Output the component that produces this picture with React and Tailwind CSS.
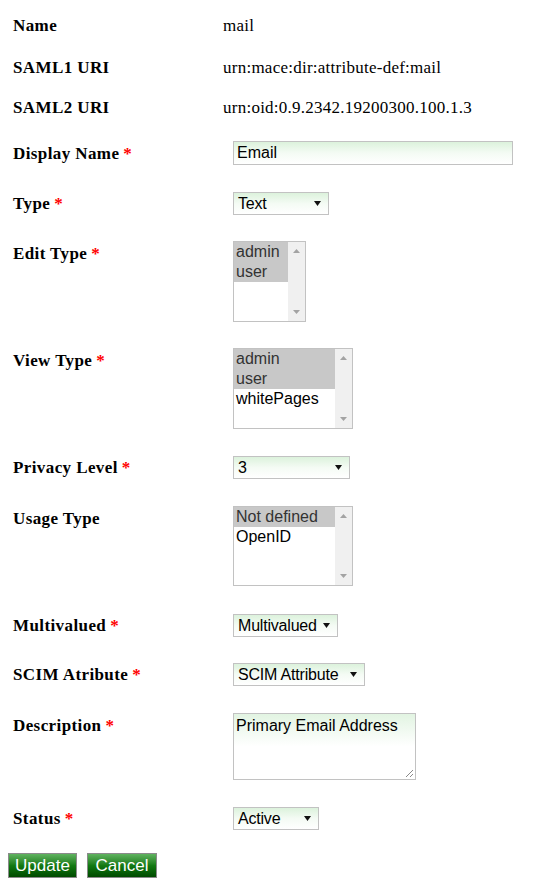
import React from 'react';

const serif = "font-['Liberation_Serif','Times_New_Roman',serif]";
const sans = "font-['Liberation_Sans',Arial,sans-serif]";

const Req = () => <span className="text-[#ff0000] ml-[4px]">*</span>;

const Label = ({ children, req, pt = 'pt-[3px]' }) => (
  <div className={`w-[220px] shrink-0 ${pt} text-[17px] leading-[18px] font-bold tracking-[0.4px] text-black ${serif}`}>
    {children}
    {req && <Req />}
  </div>
);

const Arrow = () => (
  <svg width="7" height="5" viewBox="0 0 7 5" className="shrink-0">
    <path d="M0 0 L7 0 L3.5 5 Z" fill="#111" />
  </svg>
);

const Select = ({ value, width }) => (
  <div
    className={`h-[23px] border border-[#c2c2c2] bg-gradient-to-b from-[#dcf2dc] via-[#f4fbf4] to-white flex items-center justify-between pl-[4px] pr-[7px] text-[16px] tracking-[-0.2px] text-black ${sans}`}
    style={{ width }}
  >
    <span className="leading-none">{value}</span>
    <Arrow />
  </div>
);

const ListBox = ({ items, selected, width, height = 81 }) => (
  <div className={`flex border border-[#c2c2c2] bg-white ${sans}`} style={{ width, height }}>
    <div className="flex-1 min-w-0">
      {items.map(it => (
        <div
          key={it}
          className={`h-[20px] leading-[20px] pl-[2px] text-[16px] ${selected.includes(it) ? 'bg-[#c8c8c8] text-[#333]' : 'text-black'}`}
        >
          {it}
        </div>
      ))}
    </div>
    <div className="w-[17px] bg-[#f0f0f0] flex flex-col items-center justify-between py-[7px]">
      <svg width="7" height="4" viewBox="0 0 7 4"><path d="M0 4 L7 4 L3.5 0 Z" fill="#a3a3a3" /></svg>
      <svg width="7" height="4" viewBox="0 0 7 4"><path d="M0 0 L7 0 L3.5 4 Z" fill="#a3a3a3" /></svg>
    </div>
  </div>
);

const TextRow = ({ label, value, h }) => (
  <div className="flex items-start pl-[13px]" style={{ height: h }}>
    <div className={`w-[210px] shrink-0 text-[17px] leading-[18px] font-bold tracking-[0.4px] ${serif}`}>{label}</div>
    <div className={`text-[17px] leading-[18px] tracking-[0.25px] text-black ${serif}`}>{value}</div>
  </div>
);

const Row = ({ label, req, h, pt, children }) => (
  <div className="flex items-start pl-[13px]" style={{ height: h }}>
    <Label req={req} pt={pt}>{label}</Label>
    {children}
  </div>
);

const Button = ({ children, w }) => (
  <button
    className={`h-[25px] border border-[#8a8a8a] bg-gradient-to-b from-[#5fb35f] via-[#137a13] to-[#004a00] text-white text-[17px] leading-none ${sans}`}
    style={{ width: w }}
  >
    {children}
  </button>
);

export default function App() {
  return (
    <div className="w-[542px] min-h-[882px] bg-white pt-[17px] text-black">
      <TextRow label="Name" value="mail" h={42} />
      <TextRow label="SAML1 URI" value="urn:mace:dir:attribute-def:mail" h={40} />
      <TextRow label="SAML2 URI" value="urn:oid:0.9.2342.19200300.100.1.3" h={42} />

      <Row label="Display Name" req h={51} pt="pt-[4px]">
        <div className={`w-[280px] h-[24px] border border-[#c2c2c2] bg-gradient-to-b from-[#dcf2dc] via-[#f4fbf4] to-white pl-[3px] flex items-center text-[16px] ${sans}`}>
          Email
        </div>
      </Row>
      <Row label="Type" req h={49}>
        <Select value="Text" width={96} />
      </Row>
      <Row label="Edit Type" req h={107} pt="pt-[4px]">
        <ListBox items={['admin', 'user']} selected={['admin', 'user']} width={73} />
      </Row>
      <Row label="View Type" req h={108} pt="pt-[4px]">
        <ListBox items={['admin', 'user', 'whitePages']} selected={['admin', 'user']} width={120} />
      </Row>
      <Row label="Privacy Level" req h={50}>
        <Select value="3" width={117} />
      </Row>
      <Row label="Usage Type" h={108} pt="pt-[4px]">
        <ListBox items={['Not defined', 'OpenID']} selected={['Not defined']} width={120} height={80} />
      </Row>
      <Row label="Multivalued" req h={49}>
        <Select value="Multivalued" width={105} />
      </Row>
      <Row label="SCIM Atribute" req h={50}>
        <Select value="SCIM Attribute" width={132} />
      </Row>
      <Row label="Description" req h={94} pt="pt-[4px]">
        <div className={`relative w-[183px] h-[67px] border border-[#c2c2c2] bg-gradient-to-b from-[#e2f4e2] via-white to-white pl-[2px] pt-[2px] text-[16px] leading-[20px] ${sans}`}>
          Primary Email Address
          <svg width="9" height="9" viewBox="0 0 9 9" className="absolute right-[1px] bottom-[1px]">
            <path d="M8 1 L1 8 M8 5 L5 8" stroke="#8a8a8a" strokeWidth="1" />
          </svg>
        </div>
      </Row>
      <Row label="Status" req h={46}>
        <Select value="Active" width={86} />
      </Row>

      <div className="flex gap-[10px] pl-[8px]">
        <Button w={69}>Update</Button>
        <Button w={70}>Cancel</Button>
      </div>
    </div>
  );
}
